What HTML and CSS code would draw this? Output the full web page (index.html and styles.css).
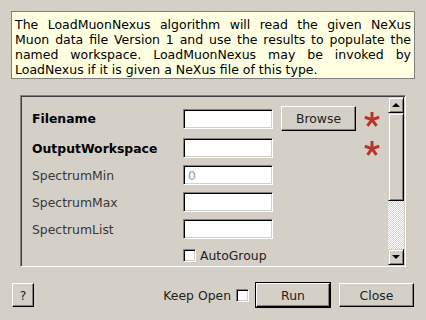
FILE: index.html
```html
<!DOCTYPE html>
<html>
<head>
<meta charset="utf-8">
<link rel="stylesheet" href="styles.css">
</head>
<body>
<div class="desc">
  <div class="line just">The LoadMuonNexus algorithm will read the given NeXus</div>
  <div class="line just">Muon data file Version 1 and use the results to populate the</div>
  <div class="line just">named workspace. LoadMuonNexus may be invoked by</div>
  <div class="line">LoadNexus if it is given a NeXus file of this type.</div>
</div>

<div class="panel">
  <div class="content">
    <div class="grid">
      <div class="label bold">Filename</div>
      <div class="input"></div>
      <div class="btn browse">Browse</div>
      <svg class="star" viewBox="0 0 16 16"><g stroke="#b8352a" stroke-width="3"><line x1="8" y1="8.6" x2="8" y2="1"/><line x1="8" y1="8.6" x2="15.2" y2="6.3"/><line x1="8" y1="8.6" x2="12.5" y2="14.8"/><line x1="8" y1="8.6" x2="3.5" y2="14.8"/><line x1="8" y1="8.6" x2="0.8" y2="6.3"/></g></svg>

      <div class="label bold">OutputWorkspace</div>
      <div class="input"></div>
      <div></div>
      <svg class="star" viewBox="0 0 16 16"><g stroke="#b8352a" stroke-width="3"><line x1="8" y1="8.6" x2="8" y2="1"/><line x1="8" y1="8.6" x2="15.2" y2="6.3"/><line x1="8" y1="8.6" x2="12.5" y2="14.8"/><line x1="8" y1="8.6" x2="3.5" y2="14.8"/><line x1="8" y1="8.6" x2="0.8" y2="6.3"/></g></svg>

      <div class="label">SpectrumMin</div>
      <div class="input"><span class="ph">0</span></div>
      <div></div><div></div>

      <div class="label">SpectrumMax</div>
      <div class="input"></div>
      <div></div><div></div>

      <div class="label">SpectrumList</div>
      <div class="input"></div>
      <div></div><div></div>

      <div></div>
      <div class="check-row"><span class="check"></span><span>AutoGroup</span></div>
    </div>
  </div>
  <div class="vscroll">
    <div class="sbtn"><span class="tri-up"></span></div>
    <div class="slider"></div>
    <div class="trough"></div>
    <div class="sbtn"><span class="tri-down"></span></div>
  </div>
</div>

<div class="footer">
  <div class="btn help">?</div>
  <div class="spacer"></div>
  <span class="keep">Keep Open</span>
  <span class="check"></span>
  <div class="default"><div class="btn run">Run</div></div>
  <div class="btn close">Close</div>
</div>
</body>
</html>
```

FILE: styles.css
```css
* { box-sizing: border-box; }
html, body { margin: 0; padding: 0; }
body {
  width: 426px;
  height: 320px;
  overflow: hidden;
  background: #d4d0c8;
  font-family: "DejaVu Sans", sans-serif;
  font-size: 12.4px;
  color: #000;
}
.desc {
  margin: 11px 0 0 11px;
  width: 404px;
  height: 68px;
  background: #ffffe1;
  border: 1px solid #808080;
  padding: 5px 3px 0 3px;
  line-height: 15px;
  font-size: 12.5px;
}
.line { white-space: nowrap; }
.line.just { text-align: justify; text-align-last: justify; }
.panel {
  margin: 16px 0 0 20px;
  width: 386px;
  height: 172px;
  border: 1px solid;
  border-color: #808080 #fff #fff #808080;
  box-shadow: inset 1px 1px #404040, inset -1px -1px #d4d0c8;
  padding: 1px;
  display: flex;
}
.content {
  flex: 1;
  overflow: hidden;
  padding: 9px 0 0 10px;
}
.grid {
  display: grid;
  grid-template-columns: 143px 90px 75px 16px;
  grid-template-rows: 25px 20px 20px 20px 20px 19px;
  column-gap: 8px;
  row-gap: 7px;
  align-items: center;
}
.label { color: #383838; white-space: nowrap; }
.label.bold { color: #000; font-weight: bold; }
.input {
  height: 20px;
  background: #fff;
  border: 1px solid;
  border-color: #808080 #fff #fff #808080;
  box-shadow: inset 1px 1px #000, inset -1px -1px #d4d0c8;
  padding: 0 0 0 4px;
  display: flex;
  align-items: center;
}
.ph { color: #9a9a9a; }
.btn {
  background: #d4d0c8;
  border: 1px solid;
  border-color: #fff #000 #000 #fff;
  box-shadow: inset -1px -1px #808080;
  display: flex;
  align-items: center;
  justify-content: center;
  color: #222;
}
.browse { height: 25px; }
.star { width: 16px; height: 16px; display: block; }
.check-row {
  grid-column: 2 / 5;
  display: flex;
  align-items: center;
  gap: 4px;
  color: #222;
}
.check {
  width: 13px;
  height: 13px;
  background: #fff;
  border: 1px solid;
  border-color: #808080 #fff #fff #808080;
  box-shadow: inset 1px 1px #000, inset -1px -1px #d4d0c8;
  flex: none;
}
.vscroll {
  width: 16px;
  display: flex;
  flex-direction: column;
}
.sbtn {
  height: 16px;
  background: #d4d0c8;
  border: 1px solid;
  border-color: #d4d0c8 #000 #000 #d4d0c8;
  box-shadow: inset 1px 1px #fff, inset -1px -1px #808080;
  display: flex;
  align-items: center;
  justify-content: center;
}
.tri-up {
  width: 0; height: 0;
  border-left: 4px solid transparent;
  border-right: 4px solid transparent;
  border-bottom: 4px solid #000;
}
.tri-down {
  width: 0; height: 0;
  border-left: 4px solid transparent;
  border-right: 4px solid transparent;
  border-top: 4px solid #000;
}
.slider {
  height: 88px;
  background: #d4d0c8;
  border: 1px solid;
  border-color: #d4d0c8 #000 #000 #d4d0c8;
  box-shadow: inset 1px 1px #fff, inset -1px -1px #808080;
}
.trough {
  flex: 1;
  background-image: conic-gradient(#fff 25%, #d4d0c8 0 50%, #fff 0 75%, #d4d0c8 0);
  background-size: 2px 2px;
}
.footer {
  margin: 15px 0 0 0;
  padding: 0 12px;
  height: 26px;
  display: flex;
  align-items: center;
}
.help { width: 22px; height: 24px; }
.spacer { flex: 1; }
.keep { color: #222; margin-right: 5px; }
.footer .check { margin-right: 6px; }
.default { border: 1px solid #000; width: 76px; height: 26px; }
.run { width: 100%; height: 100%; }
.close { width: 75px; height: 24px; margin-left: 8px; }
```
